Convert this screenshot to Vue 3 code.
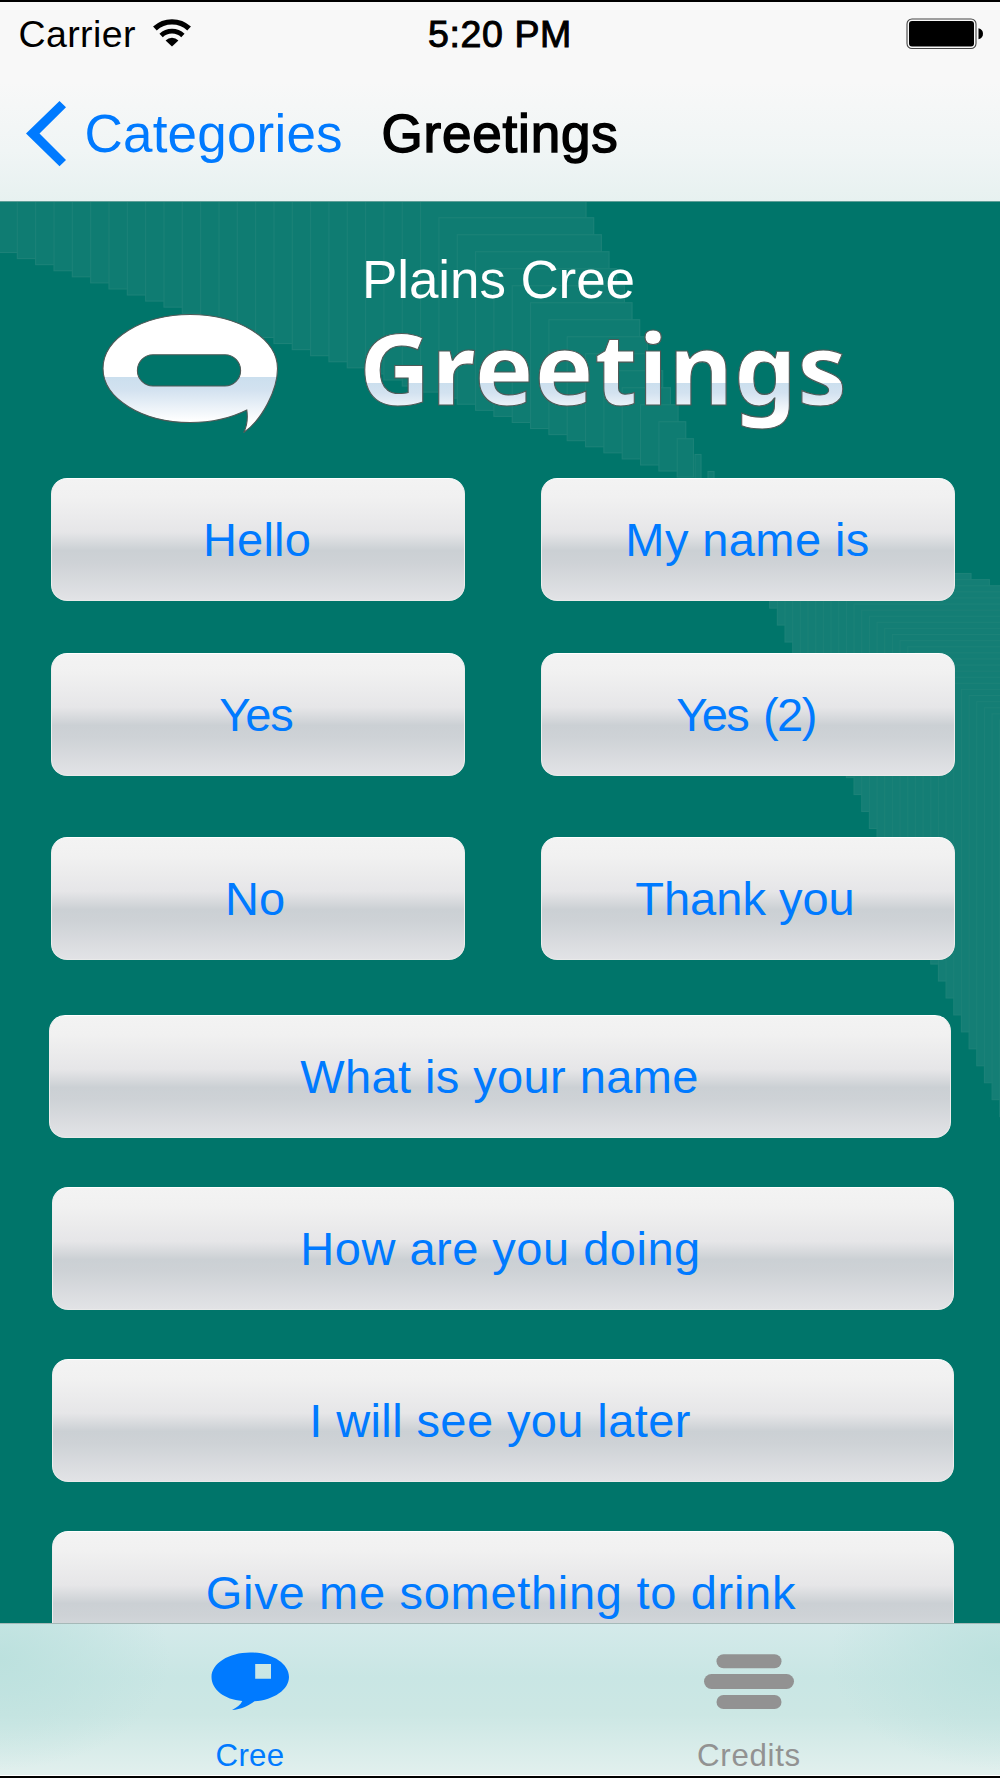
<script setup>

  import { ref } from "vue";

  const activeTab = ref("cree");

  // spacing: letter spacing, word: extra word gap, nudge: right padding that pulls the label left (px)
  const pairs = [
    [{ text: "Hello", spacing: 0.2, nudge: 2 }, { text: "My name is", spacing: 0.4, nudge: 1 }],
    [{ text: "Yes", spacing: -1, nudge: 4 }, { text: "Yes (2)", spacing: -1.5, word: 3, nudge: 4 }],
    [{ text: "No", spacing: 0, nudge: 6 }, { text: "Thank you", spacing: 0, nudge: 6 }],
  ];
  const phrases = [
    { text: "What is your name", spacing: 0.4, nudge: 1 },
    { text: "How are you doing", spacing: 0.5, nudge: 5 },
    { text: "I will see you later", spacing: 0.4, nudge: 6 },
    { text: "Give me something to drink", spacing: 0.7, nudge: 4 },
  ];

  // stepped rectangles of the background, each one painted over the previous
  const steps = [];
  for (let k = 0; k < 38; k++) {
    const x = -1 + 18.33 * k;
    const y = 217.7 + 17 * (k - 24);
    steps.push({ x, y, w: 593.7 + 7.67 * (k - 24) - x, h: 252.5 + 6.07 * k - y, fill: "#0f7c72" });
  }
  steps.push({ x: 695, y: 454.5, w: 6, h: 40, fill: "#0f7c72" });
  steps.push({ x: 708, y: 471.5, w: 6, h: 20, fill: "#0f7c72" });
  for (let j = -7; j < 26; j++) {
    const x = 815.7 + 7.67 * j;
    const y = 573.5 + 6.1 * j;
    steps.push({ x, y, w: 971 + 18.35 * j - x, h: 642 + 16.95 * (j + 4) - y, fill: "#147e75" });
  }

  function labelStyle(label) {
    return {
      letterSpacing: label.spacing + "px",
      wordSpacing: (label.word || 0) + "px",
      paddingRight: label.nudge + "px",
    };
  }

</script>

<template>
  <div class="phone">
    <header class="top-bar">
      <div class="status-bar">
        <div class="carrier">
          <span>Carrier</span>
          <svg class="wifi" width="40" height="30" viewBox="0 0 40 30">
            <g fill="none" stroke="#000">
              <path d="M2.9 10.6A25.2 25.2 0 0 1 37.1 10.6" stroke-width="5.4" />
              <path d="M9.1 17.4A15.8 15.8 0 0 1 30.9 17.4" stroke-width="4.8" />
            </g>
            <path d="M13.6 22.4A9.3 9.3 0 0 1 26.4 22.4L20 28.6Z" />
          </svg>
        </div>
        <div class="time">5:20 PM</div>
        <svg class="battery" width="78" height="32" viewBox="0 0 78 32">
          <rect x="1" y="1" width="69" height="29.5" rx="5" fill="none" stroke="#444" stroke-width="1.1" />
          <rect x="3" y="3" width="65" height="25.5" rx="3" />
          <path d="M72.5 10.2Q77 11.5 77 15.7Q77 20 72.5 21.3Z" />
        </svg>
      </div>
      <nav class="nav-bar">
        <svg width="42" height="68" viewBox="0 0 42 68">
          <path d="M35.5 1L42 7.2L15.5 33.6L42 60L35.5 66.3L2 33.6Z" fill="#007aff" />
        </svg>
        <a class="back">Categories</a>
        <h1>Greetings</h1>
      </nav>
    </header>

    <main class="content">
      <svg class="backdrop" width="1000" height="1421" viewBox="0 202 1000 1421">
        <rect v-for="(s, i) in steps" :key="i" :x="s.x" :y="s.y" :width="s.w" :height="s.h"
              :fill="s.fill" stroke="#1c8278" stroke-width="1.1" />
      </svg>

      <svg class="banner" width="1000" height="276" viewBox="0 202 1000 276">
        <defs>
          <linearGradient id="logo-shine" gradientUnits="userSpaceOnUse" x1="0" y1="377" x2="0" y2="421">
            <stop offset="0" stop-color="#fff" />
            <stop offset="0" stop-color="#cbdfee" />
            <stop offset="0.3" stop-color="#d3e2f0" />
            <stop offset="1" stop-color="#fff" />
          </linearGradient>
          <linearGradient id="title-shine" gradientUnits="userSpaceOnUse" x1="0" y1="383" x2="0" y2="416">
            <stop offset="0" stop-color="#fff" />
            <stop offset="0" stop-color="#cbdfee" />
            <stop offset="0.3" stop-color="#d3e2f0" />
            <stop offset="1" stop-color="#fff" />
          </linearGradient>
        </defs>
        <path fill="url(#logo-shine)" fill-rule="evenodd" stroke="#4f5957" stroke-width="1.1"
              d="M190.3 314.5C238.5 314.5 277.5 338.7 277.5 368.5C277.5 390 262 420 243.7 432.5C247 426 248 418 246.8 410
                 C231 418 212 422.5 190.3 422.5C142 422.5 103 398.3 103 368.5C103 338.7 142 314.5 190.3 314.5Z
                 M153 354.8A15.6 15.6 0 0 0 153 386H225A15.6 15.6 0 0 0 225 354.8Z" />
        <text class="language" x="362" y="297.5" textLength="273">Plains Cree</text>
        <text class="title" x="359" y="404.8" textLength="488">Greetings</text>
      </svg>

      <div class="pairs">
        <div v-for="(pair, i) in pairs" :key="i" class="pair">
          <button v-for="label in pair" :key="label.text" class="phrase" :style="labelStyle(label)">{{ label.text }}</button>
        </div>
      </div>
      <div class="list">
        <button v-for="label in phrases" :key="label.text" class="phrase" :style="labelStyle(label)">{{ label.text }}</button>
      </div>
    </main>

    <footer class="tab-bar">
      <div class="tab" :class="{ active: activeTab === 'cree' }" @click="activeTab = 'cree'">
        <svg width="100" height="64" viewBox="200 1650 100 64">
          <path fill="currentColor" fill-rule="evenodd"
                d="M250.2 1652.5C271.6 1652.5 289 1663.5 289 1677C289 1689.5 274 1700 254.5 1701.3
                   C248 1706 241 1709.5 232 1710C237 1707.5 240.5 1705 242.3 1701
                   C224.5 1699.5 211.5 1689.5 211.5 1677C211.5 1663.5 228.8 1652.5 250.2 1652.5Z
                   M255.2 1664V1678.8H271V1664Z" />
        </svg>
        <span>Cree</span>
      </div>
      <div class="tab" :class="{ active: activeTab === 'credits' }" @click="activeTab = 'credits'">
        <svg width="100" height="64" viewBox="700 1650 100 64">
          <g fill="currentColor">
            <rect x="716.5" y="1654.2" width="65" height="14" rx="7" />
            <rect x="704" y="1674" width="90" height="15" rx="7.5" />
            <rect x="716.5" y="1695" width="65" height="14" rx="7" />
          </g>
        </svg>
        <span class="credits-label">Credits</span>
      </div>
    </footer>
  </div>
</template>

<style>
body {
  margin: 0;
  background: #000;
}
</style>

<style scoped>
.phone {
  display: flex;
  flex-direction: column;
  width: 1000px;
  height: 1778px;
  box-sizing: border-box;
  border-top: 2px solid #000;
  border-bottom: 2px solid #000;
  overflow: hidden;
  font-family: "Liberation Sans", Arial, sans-serif;
  background: #00756a;
}
.top-bar {
  height: 200px;
  flex: none;
  box-sizing: border-box;
  border-bottom: 1px solid #5f9e97;
  background: linear-gradient(#f8f8f8 0%, #f8f8f8 40%, #f0f5f5 75%, #e7f1f0 100%);
}
.status-bar {
  display: grid;
  grid-template-columns: 1fr auto 1fr;
  height: 65px;
  font-size: 37.5px;
  line-height: 65px;
}
.carrier {
  display: flex;
  padding-left: 18.5px;
  letter-spacing: 0.4px;
}
.wifi {
  margin: 16px 0 0 16px;
}
.time {
  letter-spacing: 0.6px;
  -webkit-text-stroke: 1px #000;
}
.battery {
  justify-self: end;
  margin: 15.5px 16.5px 0 0;
}
.nav-bar {
  display: flex;
  align-items: flex-start;
  padding: 33px 0 0 24px;
  font-size: 53px;
  line-height: 68px;
}
.back {
  width: 278px;
  margin-left: 18.5px;
  color: #007aff;
  letter-spacing: 0.2px;
}
h1 {
  margin: 0 0 0 19px;
  font-size: 53px;
  font-weight: 400;
  letter-spacing: 0.8px;
  -webkit-text-stroke: 1.5px #000;
}
.content {
  position: relative;
  flex: 1;
  min-height: 0;
  overflow: hidden;
}
.backdrop {
  position: absolute;
  top: 0;
  left: 0;
}
.banner {
  position: relative;
  display: block;
}
.language {
  font-size: 53px;
  fill: #fff;
}
.title {
  font-family: "Noto Sans", sans-serif;
  font-size: 99px;
  font-weight: 700;
  font-variant-ligatures: none;
  fill: url(#title-shine);
  stroke: #4f5957;
  stroke-width: 1.1px;
}
.pairs,
.list {
  position: relative;
  display: flex;
  flex-direction: column;
}
.pair {
  display: flex;
  gap: 76px;
  padding-left: 51px;
  margin-bottom: 52px;
}
.pair:nth-child(2) {
  margin-bottom: 61px;
}
.pair:nth-child(3) {
  margin-bottom: 55px;
}
.list {
  gap: 49px;
  padding-left: 52px;
}
.list .phrase {
  width: 902px;
}
.list .phrase:first-child {
  margin-left: -3px;
}
.phrase {
  display: block;
  flex: none;
  box-sizing: border-box;
  width: 414px;
  height: 123px;
  padding: 0 0 1px;
  border: 1px solid #f7f7f7;
  border-color: #fff #ededed #e9eaea;
  border-radius: 16px;
  background: linear-gradient(#f3f3f3 0%, #f1f1f1 15%, #e6e6e8 44%, #cbd0d4 59%, #ced2d6 69%, #e2e3e6 100%);
  color: #007aff;
  font-family: inherit;
  font-size: 47px;
}
.tab-bar {
  display: flex;
  flex: none;
  height: 153px;
  box-sizing: border-box;
  border-top: 1px solid #a5b9b8;
  border-bottom: 1px solid #fff;
  background:
    radial-gradient(ellipse 170px 110px at 0 35px, #bce1de, rgba(188, 225, 222, 0)),
    radial-gradient(ellipse 170px 110px at 1000px 35px, #bce1de, rgba(188, 225, 222, 0)),
    linear-gradient(#d4eaea 0%, #c9e6e4 35%, #cce7e4 60%, #e2f0ee 100%);
}
.tab {
  display: flex;
  flex: 1;
  flex-direction: column;
  align-items: center;
  padding-top: 26px;
  color: #929292;
  font-size: 31.25px;
  line-height: 36px;
}
.tab svg {
  flex: none;
}
.tab span {
  margin-top: 24px;
  letter-spacing: 0.3px;
}
.tab .credits-label {
  margin-right: 2px;
  letter-spacing: 0.7px;
}
.tab.active {
  color: #007aff;
}
</style>
